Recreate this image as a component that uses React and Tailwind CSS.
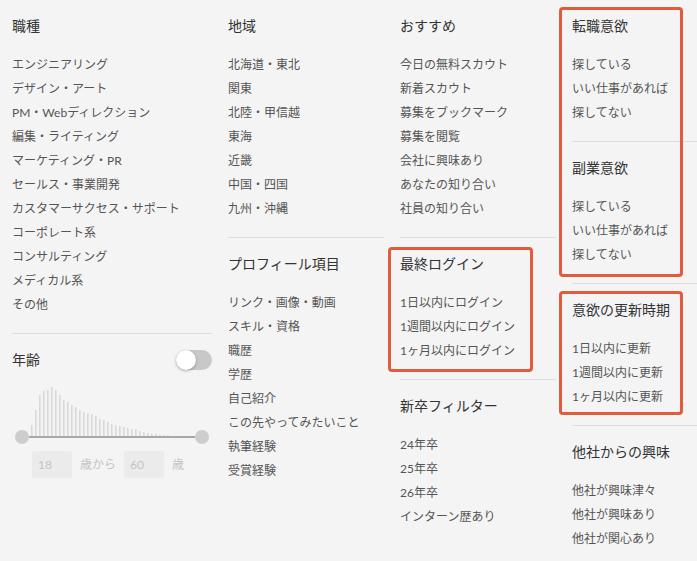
import React from 'react';

const FONT = { fontFamily: 'Lato, "Noto Sans CJK JP", sans-serif' };

const AGE_BARS = [13, 28, 43, 47, 48, 51, 48, 43, 38, 36, 33, 31, 28, 26, 25, 24, 22, 19, 18, 16, 14, 13, 12, 11, 10, 9, 9, 7, 6, 5, 4, 4, 3, 3, 3, 2, 2, 2, 1, 1, 1];

const Section = ({ title, items, first }) => (
  <div className={`pt-4 pb-4 ${first ? '' : 'border-t border-[#dcdcdc]'}`}>
    <h3 className="h-5 text-sm leading-5 text-[#333]">{title}</h3>
    <ul className="mt-[17px]">
      {items.map(item => (
        <li key={item} className="text-xs leading-6 text-[#555] whitespace-nowrap">{item}</li>
      ))}
    </ul>
  </div>
);

// red annotation frame laid over a group of filters
const Highlight = ({ className }) => (
  <span className={`pointer-events-none absolute rounded-[4px] border-[3px] border-[#e35b3d] ${className}`} />
);

const AgeFilter = () => (
  <div className="border-t border-[#dcdcdc] pt-[15px]">
    <div className="flex h-[22px] items-center justify-between">
      <h3 className="text-sm leading-5 text-[#333]">年齢</h3>
      <div className="relative h-5 w-9 rounded-full bg-[#c8c8c8]">
        <span className="absolute left-0 top-0 h-5 w-5 rounded-full bg-white shadow-[0_1px_3px_rgba(0,0,0,0.3)]" />
      </div>
    </div>

    {/* distribution chart */}
    <svg width="200" height="52" viewBox="0 0 200 52" className="mt-[15px] block">
      {AGE_BARS.map((h, i) => (
        <rect key={i} x={19 + i * 4} y={52 - h} width="1.6" height={h} fill="#d9d9d9" />
      ))}
    </svg>

    {/* range slider */}
    <div className="-mt-[8px] flex items-center px-[3px]">
      <span className="h-[14px] w-[14px] shrink-0 rounded-full bg-[#cdcdcd]" />
      <span className="h-[2px] flex-1 bg-[#a8a8a8]" />
      <span className="h-[14px] w-[14px] shrink-0 rounded-full bg-[#cdcdcd]" />
    </div>

    <div className="mt-[7px] flex items-center text-xs text-[#c4c4c4]">
      <span className="ml-5 flex h-[27px] w-10 items-center rounded-[2px] bg-[#ebebeb] pl-[6px]">18</span>
      <span className="ml-2 w-9">歳から</span>
      <span className="ml-2 flex h-[27px] w-10 items-center rounded-[2px] bg-[#ebebeb] pl-[6px]">60</span>
      <span className="ml-2">歳</span>
    </div>
  </div>
);

export default function App() {
  return (
    <div className="min-h-screen w-full overflow-hidden bg-[#f4f4f4]" style={FONT}>
      <div className="flex gap-4 pl-3">
        {/* 職種 / 年齢 */}
        <div className="w-[200px] shrink-0">
          <Section
            first
            title="職種"
            items={['エンジニアリング', 'デザイン・アート', 'PM・Webディレクション', '編集・ライティング', 'マーケティング・PR', 'セールス・事業開発', 'カスタマーサクセス・サポート', 'コーポレート系', 'コンサルティング', 'メディカル系', 'その他']}
          />
          <AgeFilter />
        </div>

        <div className="w-[156px] shrink-0">
          <Section first title="地域" items={['北海道・東北', '関東', '北陸・甲信越', '東海', '近畿', '中国・四国', '九州・沖縄']} />
          <Section title="プロフィール項目" items={['リンク・画像・動画', 'スキル・資格', '職歴', '学歴', '自己紹介', 'この先やってみたいこと', '執筆経験', '受賞経験']} />
        </div>

        <div className="relative w-[156px] shrink-0">
          <Section first title="おすすめ" items={['今日の無料スカウト', '新着スカウト', '募集をブックマーク', '募集を閲覧', '会社に興味あり', 'あなたの知り合い', '社員の知り合い']} />
          <Section title="最終ログイン" items={['1日以内にログイン', '1週間以内にログイン', '1ヶ月以内にログイン']} />
          <Section title="新卒フィルター" items={['24年卒', '25年卒', '26年卒', 'インターン歴あり']} />
          <Highlight className="left-[-12px] top-[247px] h-[125px] w-[145px]" />
        </div>

        <div className="relative w-[156px] shrink-0">
          <Section first title="転職意欲" items={['探している', 'いい仕事があれば', '探してない']} />
          <Section title="副業意欲" items={['探している', 'いい仕事があれば', '探してない']} />
          <Section title="意欲の更新時期" items={['1日以内に更新', '1週間以内に更新', '1ヶ月以内に更新']} />
          <Section title="他社からの興味" items={['他社が興味津々', '他社が興味あり', '他社が関心あり']} />
          <Highlight className="left-[-13px] top-[7px] h-[270px] w-[124px]" />
          <Highlight className="left-[-13px] top-[291px] h-[124px] w-[124px]" />
        </div>
      </div>
    </div>
  );
}
